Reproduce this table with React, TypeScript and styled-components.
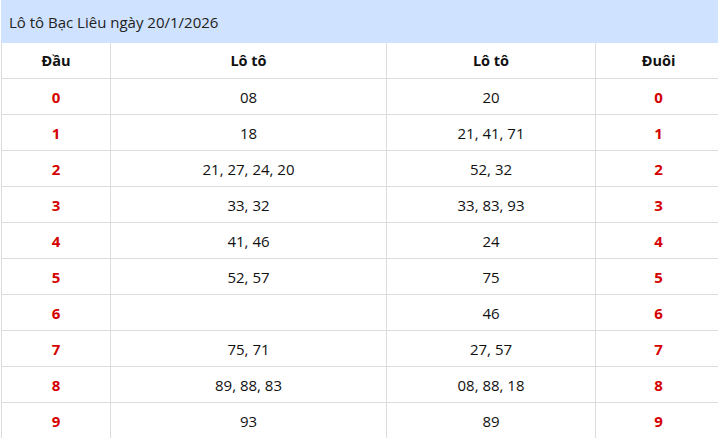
import React from 'react';
import styled, { createGlobalStyle } from 'styled-components';

const GlobalStyle = createGlobalStyle`
  html, body {
    margin: 0;
    padding: 0;
    background: #fff;
    overflow: hidden;
  }
  body {
    font-family: "Open Sans", "Noto Sans", sans-serif;
    color: #111;
  }
`

const Wrapper = styled.div`
  width: 720px;
  padding-left: 1px;
`

const Title = styled.div`
  height: 43px;
  display: flex;
  align-items: center;
  padding-left: 8px;
  background: #cfe2ff;
  font-size: 15px;
  color: #222;
`

const Table = styled.table`
  width: 100%;
  border-collapse: collapse;
  table-layout: fixed;
  font-size: 15px;
`

const Head = styled.th`
  height: 35px;
  padding: 0;
  border: 1px solid #dcdcdc;
  border-top: none;
  font-weight: 700;
  font-size: 14.5px;
  text-align: center;
`

const Cell = styled.td<{ $key?: boolean }>`
  height: 35px;
  padding: 0;
  border: 1px solid #dcdcdc;
  text-align: center;
  font-weight: ${p => (p.$key ? 700 : 400)};
  color: ${p => (p.$key ? '#d50000' : '#111')};
  font-size: 15px;
`

const rows: [string, string][] = [
  ['08', '20'],
  ['18', '21, 41, 71'],
  ['21, 27, 24, 20', '52, 32'],
  ['33, 32', '33, 83, 93'],
  ['41, 46', '24'],
  ['52, 57', '75'],
  ['', '46'],
  ['75, 71', '27, 57'],
  ['89, 88, 83', '08, 88, 18'],
  ['93', '89'],
];

function App() {
  return (
    <>
      <GlobalStyle />
      <Wrapper>
        <Title>Lô tô Bạc Liêu ngày 20/1/2026</Title>
        <Table>
          <colgroup>
            <col style={{ width: 109 }} />
            <col style={{ width: 276 }} />
            <col style={{ width: 209 }} />
            <col style={{ width: 126 }} />
          </colgroup>
          <thead>
            <tr>
              <Head>Đầu</Head>
              <Head>Lô tô</Head>
              <Head>Lô tô</Head>
              <Head>Đuôi</Head>
            </tr>
          </thead>
          <tbody>
            {rows.map(([head, tail], i) => (
              <tr key={i}>
                <Cell $key>{i}</Cell>
                <Cell>{head}</Cell>
                <Cell>{tail}</Cell>
                <Cell $key>{i}</Cell>
              </tr>
            ))}
          </tbody>
        </Table>
      </Wrapper>
    </>
  )
}

export default App;
